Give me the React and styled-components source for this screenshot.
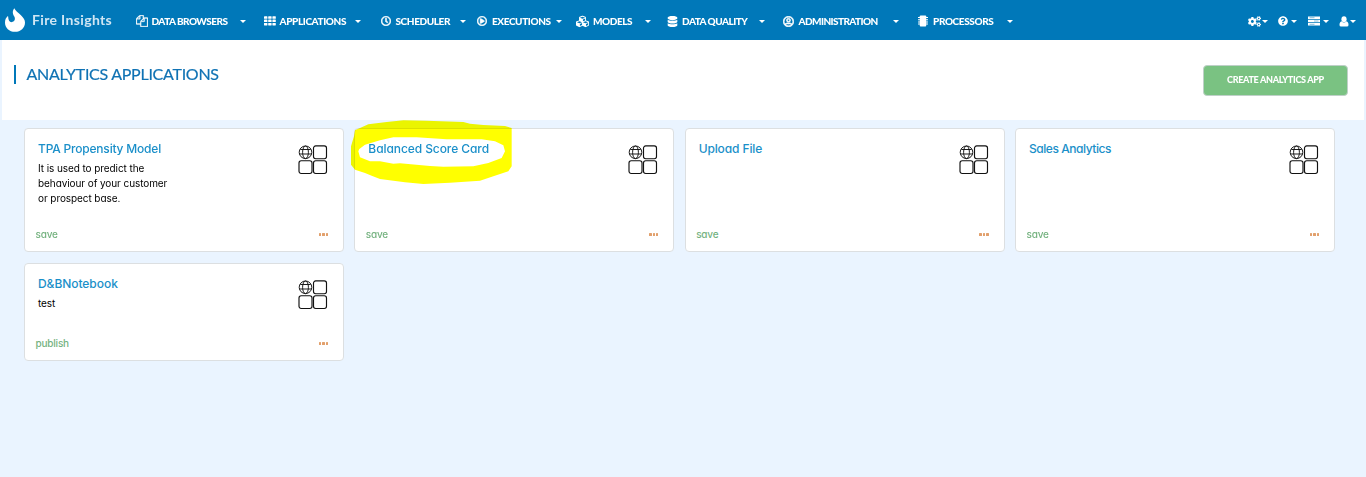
import React from 'react';
import styled, { createGlobalStyle } from 'styled-components';
import {
  FaRegClock, FaRegPlayCircle, FaCubes, FaDatabase, FaRegUserCircle,
  FaCogs, FaQuestionCircle,
} from 'react-icons/fa';

const GlobalStyle = createGlobalStyle`
  * { box-sizing: border-box; }
  body { margin: 0; background: #eaf4ff; font-family: Inter, Lato, sans-serif; font-feature-settings: "cv11"; }
`;

const Page = styled.div`
  min-height: 477px;
  background: #eaf4ff;
`;

const TopBar = styled.header`
  display: flex;
  align-items: center;
  height: 40px;
  background: #0078b9;
  color: #fff;
`;

const Brand = styled.div`
  display: flex;
  align-items: center;
  width: 136px;
  height: 40px;
  padding-left: 4px;
  gap: 7px;
`;

const BrandName = styled.span`
  font: 700 14px/20px Lato, sans-serif;
  letter-spacing: 0.35px;
  white-space: nowrap;
  color: #cfe6f4;
`;

const NavItem = styled.div`
  display: flex;
  align-items: center;
  flex: none;
  width: ${(p) => p.$width}px;
  height: 40px;
  padding-top: 2px;
`;

const NavIcon = styled.span`
  display: flex;
  flex: none;
  width: ${(p) => p.$width}px;
  svg { display: block; }
`;

const NavLabel = styled.span`
  flex: none;
  width: ${(p) => p.$width}px;
  font: 900 10px/14px Lato, sans-serif;
  letter-spacing: ${(p) => p.$spacing}px;
  white-space: nowrap;
`;

const Caret = styled.i`
  flex: none;
  border: 3px solid transparent;
  border-top-color: #fff;
  border-bottom: 0;
`;

const Tools = styled.div`
  display: flex;
  margin-left: auto;
`;

const Heading = styled.section`
  display: flex;
  justify-content: space-between;
  align-items: flex-start;
  height: 80px;
  margin: 0 2px;
  padding: 25px 16px 0 12px;
  background: #fff;
`;

const Title = styled.h1`
  margin: 0;
  height: 19px;
  padding-left: 10.5px;
  border-left: 2px solid #0078b9;
  font: 400 16px/18px Lato, sans-serif;
  letter-spacing: -0.27px;
  -webkit-text-stroke: 0.2px #0f72b4;
  color: #0f72b4;
  white-space: nowrap;
`;

const CreateButton = styled.button`
  width: 145px;
  height: 31px;
  padding: 0 0 1px;
  border: 1px solid #bfd0c8;
  border-radius: 4px;
  background: #7ac282;
  color: #fff;
  font: 900 9px/14px Lato, sans-serif;
  letter-spacing: -0.3px;
  white-space: nowrap;
`;

const CardGrid = styled.main`
  display: grid;
  grid-template-columns: repeat(4, 320px);
  grid-template-rows: 124px 98px;
  gap: 11px 10.33px;
  padding: 8px 0 0 24px;
`;

const Card = styled.article`
  position: relative;
  display: flex;
  flex-direction: column;
  justify-content: space-between;
  padding: 11px 15px 9px 13px;
  border: 1px solid #dcdfe1;
  border-radius: 4px;
  background: #fff;
`;

const CardTop = styled.div`
  display: flex;
  justify-content: space-between;
`;

const CardName = styled.h2`
  margin: 0;
  font-size: 12px;
  line-height: 17px;
  font-weight: 500;
  letter-spacing: ${(p) => p.$spacing}px;
  color: #1a8fc9;
  white-space: nowrap;
`;

const CardText = styled.p`
  width: 140px;
  margin: 4px 0 0;
  font-size: 10px;
  line-height: 15px;
  letter-spacing: -0.08px;
  color: #000;
  white-space: pre-line;
`;

const CardIcon = styled.svg`
  display: block;
  margin-top: 4.5px;
`;

const CardFoot = styled.div`
  display: flex;
  justify-content: space-between;
  align-items: center;
  height: 15px;
  margin-left: -2.5px;
`;

const Status = styled.span`
  font-size: 10px;
  line-height: 15px;
  font-weight: 500;
  letter-spacing: -0.2px;
  color: #74b27f;
`;

const Dots = styled.span`
  display: flex;
  gap: 1px;
  i { width: 2.4px; height: 2.6px; background: #e2a06c; border-radius: 0.5px; }
`;

const Highlight = styled.svg`
  position: absolute;
  left: -5px;
  top: -10px;
  pointer-events: none;
  mix-blend-mode: multiply;
`;

const FilesIcon = () => (
  <svg width="12" height="12" viewBox="0 0 1792 1792" fill="currentColor" stroke="currentColor" strokeWidth="40">
    <path d="M1696 384q40 0 68 28t28 68v1216q0 40-28 68t-68 28h-960q-40 0-68-28t-28-68v-288h-544q-40 0-68-28t-28-68v-672q0-40 20-88t48-76l408-408q28-28 76-48t88-20h416q40 0 68 28t28 68v328q68-40 128-40h416zm-544 213l-299 299h299v-299zm-640-384l-299 299h299v-299zm196 647l316-316v-416h-384v416q0 40-28 68t-68 28h-416v640h512v-256q0-40 20-88t48-76zm956 804v-1152h-384v416q0 40-28 68t-68 28h-416v640h896z" />
  </svg>
);

const GridIcon = () => (
  <svg width="12" height="10" viewBox="0 0 12 10" fill="currentColor">
    {[0, 4.2, 8.4].map((x) => [0.3, 3.6, 6.9].map((y) => (
      <rect key={`${x}-${y}`} x={x} y={y} width="3.4" height="2.5" rx="0.4" />
    )))}
  </svg>
);

const ChipIcon = () => (
  <svg width="10" height="12" viewBox="0 0 10 12" fill="currentColor">
    <rect x="1.8" y="0.4" width="6.4" height="11.2" rx="0.8" />
    <path d="M0 2h10v1H0zM0 4.2h10v1H0zM0 6.4h10v1H0zM0 8.6h10v1H0z" />
  </svg>
);

const ServerIcon = () => (
  <svg width="12" height="10" viewBox="0 0 12 10">
    <path fill="currentColor" d="M0 .4h12v2.6H0zM0 3.7h12v2.6H0zM0 7h12v2.6H0z" />
    <path stroke="#0078b9" strokeWidth="0.8" d="M1.5 1.7h5M6 5h4.5M1.5 8.3h5" opacity="0.6" />
  </svg>
);

const UserIcon = () => (
  <svg width="10" height="11" viewBox="0 0 10 11" fill="currentColor">
    <ellipse cx="5" cy="3.2" rx="2.6" ry="3" />
    <path d="M2.6 5.2Q5 7.6 7.4 5.2Q9.5 5.6 9.5 9Q9.5 10.6 7.9 10.6H2.1Q.5 10.6 .5 9Q.5 5.6 2.6 5.2Z" />
  </svg>
);

const Flame = () => (
  <svg width="21" height="26" viewBox="0 0 21 26">
    <path fill="#fff" d="M10.3 1.2C11.4 3.9 14.2 5.6 16.7 7.9C19.4 10.5 21 12.6 21 15.4C21 20.6 16.7 24.8 11 24.8C5.2 24.8 1 20.6 1 15.4C1 12.5 2.3 10.3 3.9 9C4.4 9.6 4.1 10.7 4.6 12.4C5.2 14.4 6.5 15.3 8 15.1C10.2 14.8 11.3 13 10.8 10.8C10.4 9.2 8.8 8 8.8 5.6C8.8 3.8 9.3 2.4 10.3 1.2Z" />
  </svg>
);

const AppIcon = () => (
  <CardIcon width="30" height="30" viewBox="0 0 30 30" fill="none" stroke="#111" strokeWidth="1.15">
    <rect x="15.5" y="0.9" width="13" height="12.8" rx="2.2" />
    <rect x="1" y="15.7" width="13" height="12.8" rx="2.2" />
    <rect x="15.5" y="15.7" width="13" height="12.8" rx="2.2" />
    <g strokeWidth="0.95">
      <circle cx="7.5" cy="7.3" r="6.3" />
      <ellipse cx="7.5" cy="7.3" rx="2.9" ry="6.3" />
      <path d="M2.3 4.5H12.7M1.2 9H13.8" />
    </g>
  </CardIcon>
);

const outline = { stroke: 'currentColor', strokeWidth: 28 };

const NAV = [
  { label: 'DATA BROWSERS', icon: <FilesIcon />, width: 128, slot: 15.5, text: 88, spacing: -0.53 },
  { label: 'APPLICATIONS', icon: <GridIcon />, width: 117, slot: 15.5, text: 75.5, spacing: -0.38 },
  { label: 'SCHEDULER', icon: <FaRegClock size={10} {...outline} />, width: 96, slot: 14.5, text: 64, spacing: -0.4 },
  { label: 'EXECUTIONS', icon: <FaRegPlayCircle size={10} {...outline} />, width: 99, slot: 15, text: 64, spacing: -0.4 },
  { label: 'MODELS', icon: <FaCubes size={13} />, width: 91, slot: 17, text: 51.5, spacing: -0.45 },
  { label: 'DATA QUALITY', icon: <FaDatabase size={11} />, width: 116, slot: 15, text: 77, spacing: -0.5 },
  { label: 'ADMINISTRATION', icon: <FaRegUserCircle size={11} {...outline} />, width: 135, slot: 15.5, text: 94, spacing: -0.57 },
  { label: 'PROCESSORS', icon: <ChipIcon />, width: 100, slot: 15, text: 73.5, spacing: -0.38 },
];

const TOOLS = [
  { id: 'settings', icon: <FaCogs size={13} />, width: 30, slot: 14 },
  { id: 'help', icon: <FaQuestionCircle size={10} />, width: 30, slot: 12.5 },
  { id: 'server', icon: <ServerIcon />, width: 31, slot: 15 },
  { id: 'account', icon: <UserIcon />, width: 27, slot: 11 },
];

const CARDS = [
  { name: 'TPA Propensity Model', text: 'It is used to predict the\nbehaviour of your customer\nor prospect base.', status: 'save', spacing: -0.2 },
  { name: 'Balanced Score Card', status: 'save', marked: true, spacing: -0.08 },
  { name: 'Upload File', status: 'save', spacing: -0.12 },
  { name: 'Sales Analytics', status: 'save', spacing: -0.45 },
  { name: 'D&BNotebook', text: 'test', status: 'publish', spacing: -0.05 },
];

const MarkerRing = () => (
  <Highlight width="166" height="66" viewBox="30 18 498 198">
    <path
      fill="#ff0"
      fillRule="evenodd"
      d="M45 52L85 34L140 27L190 22L260 23L370 27L390 32L430 36L495 39L515 45L515 160L505 175L460 190L420 203L330 209L250 213L195 208L120 198L95 188L75 180L45 170L33 155L33 100L42 70Z
         M55 115L58 108L75 95L120 82L160 73L230 73L320 79L425 79L465 85L490 97L495 115L485 135L445 150L400 160L310 161L270 159L180 151L160 152L120 145L90 145L60 133Z"
    />
  </Highlight>
);

export default function App() {
  return (
    <Page>
      <GlobalStyle />
      <TopBar>
        <Brand>
          <Flame />
          <BrandName>Fire Insights</BrandName>
        </Brand>
        {NAV.map((n) => (
          <NavItem key={n.label} $width={n.width}>
            <NavIcon $width={n.slot}>{n.icon}</NavIcon>
            <NavLabel $width={n.text} $spacing={n.spacing}>{n.label}</NavLabel>
            <Caret />
          </NavItem>
        ))}
        <Tools>
          {TOOLS.map((t) => (
            <NavItem key={t.id} $width={t.width}>
              <NavIcon $width={t.slot}>{t.icon}</NavIcon>
              <Caret />
            </NavItem>
          ))}
        </Tools>
      </TopBar>
      <Heading>
        <Title>ANALYTICS APPLICATIONS</Title>
        <CreateButton>CREATE ANALYTICS APP</CreateButton>
      </Heading>
      <CardGrid>
        {CARDS.map((c) => (
          <Card key={c.name}>
            <CardTop>
              <div>
                <CardName $spacing={c.spacing}>{c.name}</CardName>
                {c.text && <CardText>{c.text}</CardText>}
              </div>
              <AppIcon />
            </CardTop>
            <CardFoot>
              <Status>{c.status}</Status>
              <Dots><i /><i /><i /></Dots>
            </CardFoot>
            {c.marked && <MarkerRing />}
          </Card>
        ))}
      </CardGrid>
    </Page>
  );
}
